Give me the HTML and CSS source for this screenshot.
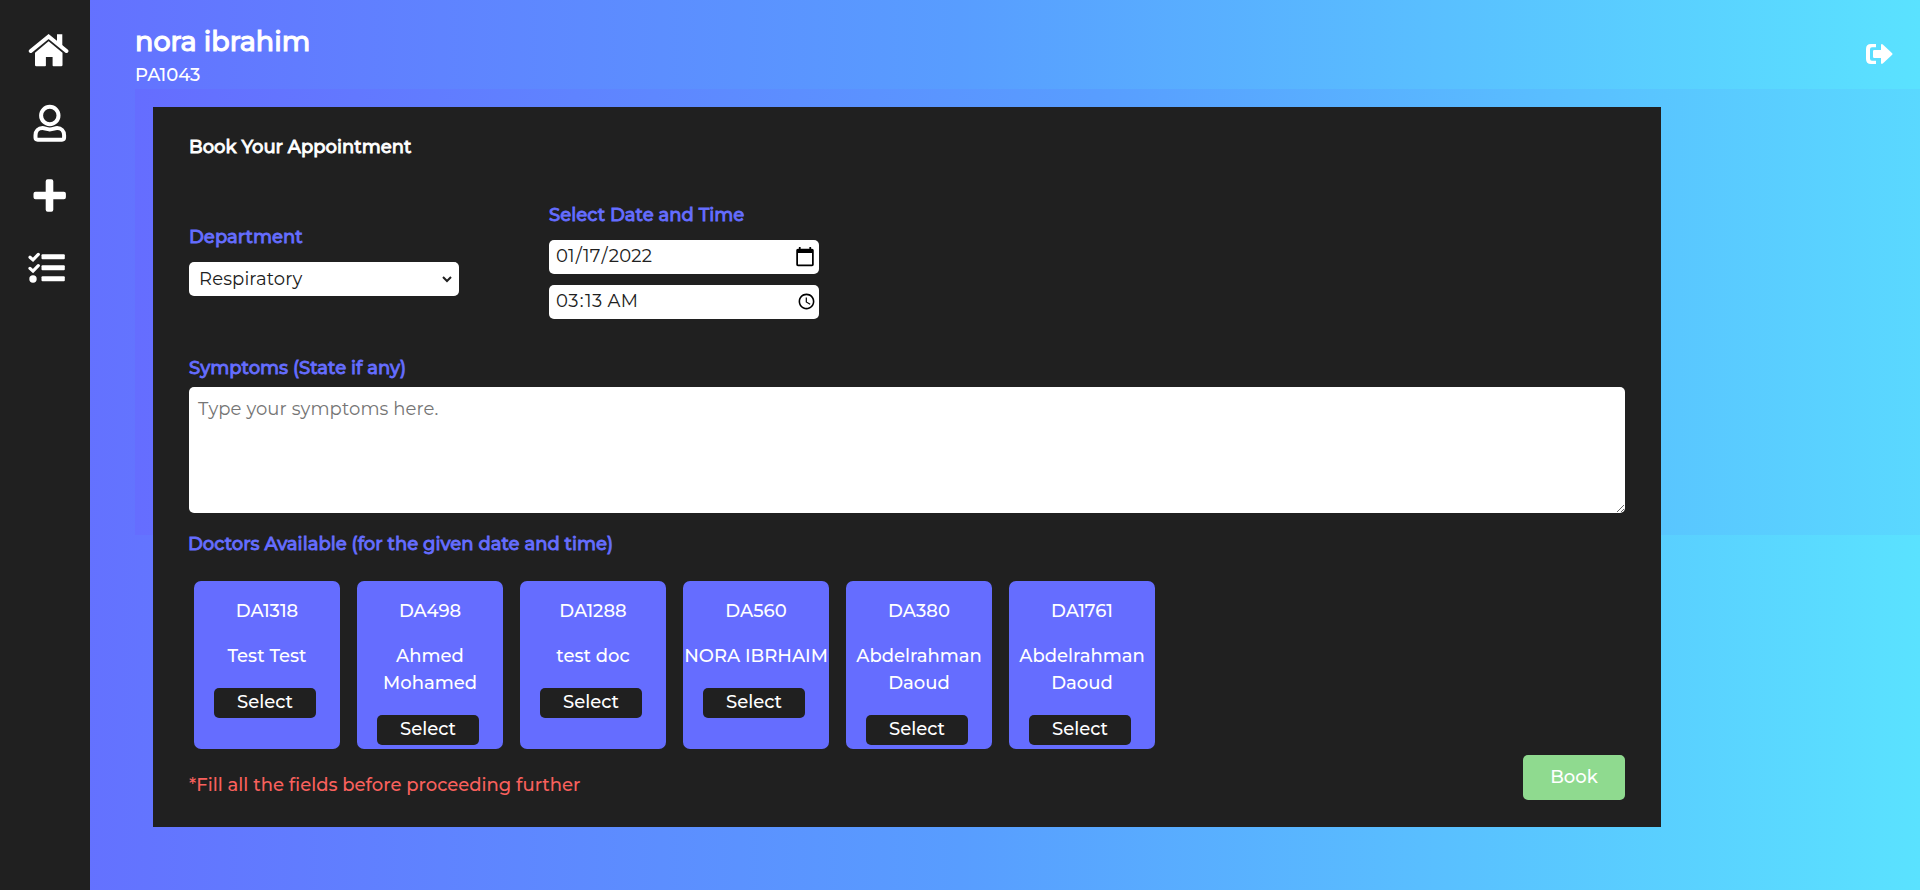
FILE: index.html
```
<!DOCTYPE html>
<html lang="en">
<head>
<meta charset="utf-8">
<title>Book Appointment</title>
<link rel="stylesheet" href="styles.css">
</head>
<body>
<div class="app">
  <nav class="sidebar">
    <a class="nav-home"><svg width="42" height="34" viewBox="0 0 42 34"><path d="M2.800 18 20.600 3.500 38.400 18" fill="none" stroke="#fff" stroke-width="4" stroke-linecap="round"/><path fill="#fff" d="M29 1.200h5.300v12L29 8.900zM20.600 8.300 34.500 19.700V32q0 1.300-1.300 1.300h-7.800q-.8 0-.8-.8v-8.600h-6.700v8.600q0 .8-.8.8H8.300Q7 33.300 7 32V19.700z"/></svg></a>
    <a class="nav-user"><svg width="34" height="38" viewBox="0 0 34 38"><g fill="none" stroke="#fff" stroke-width="4"><circle cx="16.800" cy="11.500" r="8.700"/><path stroke-linejoin="round" d="M9.500 24.100c2.500 0 3.700 1.300 7.300 1.300s4.800-1.300 7.300-1.300c4.200 0 7 3.300 7 7.200v2.300q0 2.100-2.100 2.100H4.600q-2.100 0-2.100-2.100v-2.300c0-3.900 2.800-7.200 7-7.200z"/></g></svg></a>
    <a class="nav-plus"><svg width="34" height="34" viewBox="0 0 34 34"><path fill="#fff" d="M14.700 1.300h3.600q2 0 2 2v10.500h10.600q2 0 2 2v3.500q0 2-2 2H20.300v10.500q0 2-2 2h-3.600q-2 0-2-2V21.300H2.500q-2 0-2-2v-3.500q0-2 2-2h10.200V3.300q0-2 2-2z"/></svg></a>
    <a class="nav-list"><svg width="38" height="32" viewBox="0 0 38 32"><g fill="#fff"><rect x="13.500" y="2.200" width="23.300" height="5" rx="1"/><rect x="13.500" y="13.200" width="23.300" height="5" rx="1"/><rect x="13.500" y="24.300" width="23.300" height="5" rx="1"/><circle cx="5" cy="27" r="3.700"/></g><path d="m2 5.200 3 2.700 5.300-5.500M2 16.400l3 2.700 5.300-5.500" fill="none" stroke="#fff" stroke-width="3.200" stroke-linecap="round"/></svg></a>
  </nav>
  <div class="page">
    <header class="topbar">
      <div>
        <h1 class="user-name">nora ibrahim</h1>
        <p class="user-id">PA1043</p>
      </div>
      <a class="logout"><svg width="28" height="22" viewBox="0 0 28 22"><path fill="#fff" d="M11 1v3.300H7q-2 0-2 2v9.500q0 2 2 2h4V21H6Q1 21 1 16V6Q1 1 6 1zM16 1.500q1-.8 1.800 0l9.400 8.700q.7.800 0 1.600L17.800 20.600q-1.800 1-1.800-.8V15H9.200Q8 15 8 13.800V8.200Q8 7 9.200 7H16V2z"/></svg></a>
    </header>
    <section class="booking">
      <form class="panel">
        <h2 class="panel-title">Book Your Appointment</h2>
        <div class="fields">
          <div class="field department">
            <label class="label lab-dep">Department</label>
            <select class="control dep-select"><option>Respiratory</option></select>
          </div>
          <div class="field">
            <label class="label lab-date">Select Date and Time</label>
            <input class="control date-in" type="date" value="2022-01-17">
            <input class="control time-in" type="time" value="03:13">
          </div>
        </div>
        <label class="label lab-sym">Symptoms (State if any)</label>
        <textarea class="symptoms" placeholder="Type your symptoms here."></textarea>
        <p class="label lab-doc">Doctors Available (for the given date and time)</p>
        <div class="doctors">
          <div class="card"><p class="code">DA1318</p><p class="name">Test Test</p><button type="button" class="select">Select</button></div>
          <div class="card"><p class="code">DA498</p><p class="name">Ahmed Mohamed</p><button type="button" class="select">Select</button></div>
          <div class="card"><p class="code">DA1288</p><p class="name">test doc</p><button type="button" class="select">Select</button></div>
          <div class="card"><p class="code">DA560</p><p class="name">NORA IBRHAIM</p><button type="button" class="select">Select</button></div>
          <div class="card"><p class="code">DA380</p><p class="name">Abdelrahman Daoud</p><button type="button" class="select">Select</button></div>
          <div class="card"><p class="code">DA1761</p><p class="name">Abdelrahman Daoud</p><button type="button" class="select">Select</button></div>
        </div>
        <div class="footer">
          <p class="warning">*Fill all the fields before proceeding further</p>
          <button type="button" class="book">Book</button>
        </div>
      </form>
    </section>
  </div>
</div>
</body>
</html>
```
FILE: styles.css
```
* { box-sizing: border-box; margin: 0; padding: 0; }
body {
  height: 890px;
  overflow: hidden;
  font: 500 18px/27px Montserrat, Inter, sans-serif;
  color: #fff;
  background: linear-gradient(to right, #656dff 0%, #589dff 50%, #5ae2ff 100%);
}
.app { display: flex; height: 890px; }
.sidebar {
  flex: none;
  width: 90px;
  background: #202020;
  display: flex;
  flex-direction: column;
  align-items: flex-start;
  padding-top: 33px;
}
.sidebar a, .sidebar svg { display: block; }
.nav-home { margin-left: 28px; }
.nav-user { margin: 37px 0 0 33px; }
.nav-plus { margin: 36px 0 0 33px; }
.nav-list { margin: 40px 0 0 28px; }
.page { flex: 1; min-width: 0; padding-left: 45px; }
.topbar { height: 89px; display: flex; justify-content: space-between; }
.user-name {
  margin-top: 24px;
  font-size: 27px;
  line-height: 36px;
  font-weight: 500;
  -webkit-text-stroke: 1px currentColor;
}
.user-id { margin-top: 2px; }
.logout { margin: 43px 27px 0 0; }
.logout svg { display: block; }
.booking {
  height: 446px;
  padding: 18px 0 0 18px;
  background: linear-gradient(to right, #656dff 0, #589dff 960px, #5ae2ff 1920px);
}
.panel {
  width: 1508px;
  height: 720px;
  padding: 27px 36px;
  background: #202020;
}
.panel-title {
  font-size: 18px;
  line-height: 27px;
  font-weight: 500;
  -webkit-text-stroke: .8px currentColor;
}
.fields { display: flex; align-items: center; gap: 90px; height: 128px; margin-top: 35px; }
.field { display: flex; flex-direction: column; width: 270px; }
.label { display: block; color: #656dff; -webkit-text-stroke: .8px currentColor; }
.field .label { margin-bottom: 11px; }
.control {
  width: 270px;
  height: 34px;
  border: 0;
  border-radius: 5px;
  background: #fff;
  color: #202020;
  font: 400 18px/27px Montserrat, Inter, sans-serif;
}
.dep-select { padding-left: 6px; border-right: 4px solid #fff; letter-spacing: .13px; }
.date-in, .time-in { padding: 0 1px 0 6px; letter-spacing: .2px; }
.date-in::-webkit-calendar-picker-indicator { width: 22px; height: 22px; }
.time-in { margin-top: 11px; padding-right: 0; letter-spacing: .45px; }
.lab-sym { margin-top: 31px; }
.symptoms {
  display: block;
  width: 1436px;
  height: 126px;
  margin-top: 5px;
  padding: 9px;
  border: 0;
  border-radius: 5px;
  font: 400 18px/27px Montserrat, Inter, sans-serif;
  letter-spacing: .1px;
}
.symptoms::placeholder { color: #757575; }
.lab-doc { margin: 18px 0 0 -1px; }
.doctors { display: flex; gap: 17px; margin: 23px 0 0 5px; }
.card {
  width: 146px;
  height: 168px;
  padding-top: 17px;
  border-radius: 7px;
  background: #656dff;
  text-align: center;
}
.name { margin: 18px 0; }
.select, .book {
  border: 0;
  border-radius: 5px;
  color: #fff;
  font: 500 18px/27px Montserrat, Inter, sans-serif;
}
.select { display: block; width: 102px; height: 30px; margin-left: 20px; padding-bottom: 1px; background: #202020; }
.footer { display: flex; justify-content: space-between; margin-top: 6px; }
.warning { margin-top: 17px; color: #f9605d; }
.book { width: 102px; height: 45px; background: #8fda8f; }
```
